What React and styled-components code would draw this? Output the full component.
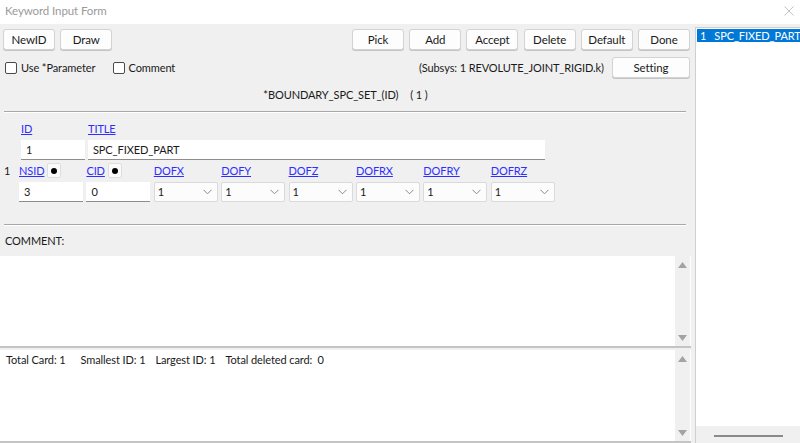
import React from 'react';
import styled, { createGlobalStyle } from 'styled-components';

const GlobalStyle = createGlobalStyle`
  html, body {
    margin: 0;
    padding: 0;
    background: #f0f0f0;
  }
  body {
    font-family: Lato, "Noto Sans", sans-serif;
    font-size: 11px;
    letter-spacing: -0.1px;
    color: #1a1a1a;
  }
`;

const Window = styled.div`
  width: 800px;
  height: 443px;
  display: flex;
  flex-direction: column;
  overflow: hidden;
  background: #f0f0f0;
`;

const TitleBar = styled.div`
  height: 24px;
  flex: none;
  background: #ffffff;
  display: flex;
  align-items: center;
  justify-content: space-between;
  padding: 0 6px 3px 5px;
  box-sizing: border-box;
  color: #9a9a9a;
  font-size: 11.5px;
`;

const CloseIcon = () => (
  <svg width="10" height="10" viewBox="0 0 10 10">
    <path d="M0.5 0.5 L9.5 9.5 M9.5 0.5 L0.5 9.5" stroke="#c4c4c4" strokeWidth="1" />
  </svg>
);

const Body = styled.div`
  flex: 1;
  display: flex;
  min-height: 0;
`;

const Main = styled.div`
  width: 691px;
  flex: none;
  display: flex;
  flex-direction: column;
`;

const ToolRow = styled.div`
  display: flex;
  align-items: center;
  height: 21px;
  padding: 0 1px 0 3px;
  margin-top: ${p => p.$top ?? 0}px;
  gap: 5.2px;
`;

const Spacer = styled.div`
  flex: 1;
`;

const Button = styled.button`
  width: ${p => p.$w ?? 52}px;
  height: 21px;
  flex: none;
  background: #fdfdfd;
  border: 1px solid #d3d3d3;
  border-radius: 3px;
  font-family: inherit;
  font-size: 11.5px;
  letter-spacing: -0.1px;
  color: #1a1a1a;
  padding: 0;
  box-shadow: 0 1px 0 #c4c4c4;
`;

const Check = styled.label`
  display: flex;
  align-items: center;
  gap: 4px;
  margin-left: 2px;
  margin-right: ${p => p.$mr ?? 0}px;
`;

const Box = styled.span`
  width: 10px;
  height: 10px;
  border: 1px solid #4a4a4a;
  border-radius: 2px;
  background: #fff;
`;

const Subsys = styled.span`
  margin-right: 3px;
`;

const KeywordTitle = styled.div`
  height: 18px;
  margin-top: 9px;
  display: flex;
  justify-content: center;
  align-items: center;
  gap: 12px;
`;

const Separator = styled.div`
  height: 1px;
  flex: none;
  margin: ${p => p.$top}px 5px 0 4px;
  background: #a8a8a8;
  box-shadow: 0 1px 0 #ffffff;
`;

const FieldRow = styled.div`
  display: flex;
  align-items: flex-start;
  padding-left: ${p => p.$left ?? 0}px;
  margin-top: ${p => p.$top ?? 0}px;
  gap: ${p => p.$gap ?? 3}px;
`;

const RowNum = styled.span`
  width: 15px;
  flex: none;
  line-height: 16px;
`;

const Field = styled.div`
  display: flex;
  flex-direction: column;
  gap: ${p => p.$gap ?? 4}px;
  width: ${p => p.$w ?? 64}px;
  flex: none;
`;

const LabelLine = styled.div`
  display: flex;
  align-items: center;
  gap: 3px;
  height: 16px;
`;

const Link = styled.a`
  color: #2e2eff;
  text-decoration: underline;
  cursor: pointer;
`;

const DotButton = styled.span`
  width: 12px;
  height: 13px;
  background: #fafafa;
  border: 1px solid #dedede;
  border-radius: 2px;
  display: flex;
  align-items: center;
  justify-content: center;
  &::after {
    content: '';
    width: 6px;
    height: 6px;
    border-radius: 50%;
    background: #000;
  }
`;

const Input = styled.div`
  height: 20px;
  box-sizing: border-box;
  background: #ffffff;
  border-bottom: 1px solid #8d8d8d;
  padding-left: 5px;
  display: flex;
  align-items: center;
`;

const Select = styled.div`
  height: 20px;
  box-sizing: border-box;
  background: #fcfcfc;
  border: 1px solid #dadada;
  border-radius: 2px;
  padding: 0 5px 0 3px;
  display: flex;
  align-items: center;
  justify-content: space-between;
`;

const Chevron = () => (
  <svg width="9" height="6" viewBox="0 0 9 6">
    <path d="M0.5 0.8 L4.5 4.8 L8.5 0.8" fill="none" stroke="#8a8a8a" strokeWidth="1" />
  </svg>
);

const SectionLabel = styled.div`
  height: 16px;
  margin: 9px 0 8px 5px;
  display: flex;
  align-items: center;
`;

const TextArea = styled.div`
  height: ${p => p.$h}px;
  box-sizing: border-box;
  flex: none;
  background: #ffffff;
  border-bottom: 2px solid #c4c4c4;
  display: flex;
  margin-top: ${p => p.$top ?? 0}px;
`;

const AreaText = styled.div`
  flex: 1;
  padding: 3px 6px;
  display: flex;
  align-items: flex-start;
  gap: 10px;
  white-space: pre;
`;

const StatusItem = styled.span`
  margin-right: ${p => p.$mr ?? 0}px;
`;

const VScroll = styled.div`
  width: 15px;
  background: #f0f0f0;
  display: flex;
  flex-direction: column;
  justify-content: space-between;
  align-items: center;
  padding: 6px 0 5px;
  margin-right: 1px;
`;

const Arrow = ({ down }) => (
  <svg width="9" height="6" viewBox="0 0 9 6">
    <path d={down ? 'M0 0 L9 0 L4.5 6 Z' : 'M0 6 L9 6 L4.5 0 Z'} fill="#a3a3a3" />
  </svg>
);

const ListPanel = styled.div`
  flex: 1;
  margin: 3px 2px 0 4px;
  background: #ffffff;
  border: 1px solid #cfcfcf;
  border-bottom: none;
  display: flex;
  flex-direction: column;
`;

const ListItem = styled.div`
  margin: 1px 1px 0;
  height: 13px;
  display: flex;
  align-items: center;
  gap: 8px;
  background: ${p => (p.$selected ? '#0078d7' : 'transparent')};
  color: ${p => (p.$selected ? '#ffffff' : '#1a1a1a')};
  padding-left: 3px;
  white-space: nowrap;
  overflow: hidden;
`;

const HScroll = styled.div`
  margin-top: auto;
  height: 17px;
  background: #f0f0f0;
  display: flex;
  align-items: center;
  justify-content: center;
  &::after {
    content: '';
    width: 69px;
    height: 2px;
    background: #8a8a8a;
    margin-top: 2px;
  }
`;

const dofs = ['DOFX', 'DOFY', 'DOFZ', 'DOFRX', 'DOFRY', 'DOFRZ'];

export default function App() {
  return (
    <Window>
      <GlobalStyle />
      <TitleBar>
        <span>Keyword Input Form</span>
        <CloseIcon />
      </TitleBar>
      <Body>
        <Main>
          <ToolRow $top={5}>
            <Button>NewID</Button>
            <Button>Draw</Button>
            <Spacer />
            <Button>Pick</Button>
            <Button>Add</Button>
            <Button>Accept</Button>
            <Button>Delete</Button>
            <Button>Default</Button>
            <Button>Done</Button>
          </ToolRow>
          <ToolRow $top={7}>
            <Check $mr={10}><Box />Use *Parameter</Check>
            <Check><Box />Comment</Check>
            <Spacer />
            <Subsys>(Subsys: 1 REVOLUTE_JOINT_RIGID.k)</Subsys>
            <Button $w={78}>Setting</Button>
          </ToolRow>
          <KeywordTitle>
            <span>*BOUNDARY_SPC_SET_(ID)</span>
            <span>( 1 )</span>
          </KeywordTitle>
          <Separator $top={8} />
          <FieldRow $left={21} $top={9}>
            <Field $w={64} $gap={3}>
              <LabelLine><Link>ID</Link></LabelLine>
              <Input>1</Input>
            </Field>
            <Field $w={457} $gap={3}>
              <LabelLine><Link>TITLE</Link></LabelLine>
              <Input>SPC_FIXED_PART</Input>
            </Field>
          </FieldRow>
          <FieldRow $left={4} $top={3} $gap={0}>
            <RowNum>1</RowNum>
            <FieldRow $gap={3.4}>
              <Field $gap={3}>
                <LabelLine><Link>NSID</Link><DotButton /></LabelLine>
                <Input>3</Input>
              </Field>
              <Field $gap={3}>
                <LabelLine><Link>CID</Link><DotButton /></LabelLine>
                <Input>0</Input>
              </Field>
              {dofs.map(d => (
                <Field key={d} $gap={3}>
                  <LabelLine><Link>{d}</Link></LabelLine>
                  <Select>1<Chevron /></Select>
                </Field>
              ))}
            </FieldRow>
          </FieldRow>
          <Separator $top={22} />
          <SectionLabel>COMMENT:</SectionLabel>
          <TextArea $h={92}>
            <AreaText />
            <VScroll><Arrow /><Arrow down /></VScroll>
          </TextArea>
          <TextArea $h={93} $top={2}>
            <AreaText>
              <StatusItem $mr={5}>Total Card: 1</StatusItem>
              <StatusItem>Smallest ID: 1</StatusItem>
              <StatusItem>Largest ID: 1</StatusItem>
              <StatusItem>{'Total deleted card:  0'}</StatusItem>
            </AreaText>
            <VScroll><Arrow /><Arrow down /></VScroll>
          </TextArea>
        </Main>
        <ListPanel>
          <ListItem $selected><span>1</span><span>SPC_FIXED_PART</span></ListItem>
          <HScroll />
        </ListPanel>
      </Body>
    </Window>
  );
}
